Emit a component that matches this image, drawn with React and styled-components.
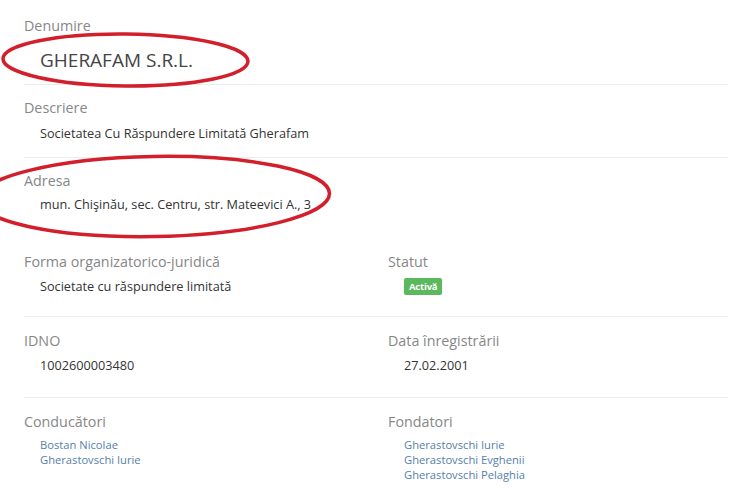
import React from "react";
import styled, { createGlobalStyle } from "styled-components";

const Global = createGlobalStyle`
  html, body { margin: 0; padding: 0; background: #fff; }
  body { font-family: "Open Sans", "Noto Sans", sans-serif; -webkit-font-smoothing: antialiased; }
`;

const Page = styled.div`
  position: relative;
  width: 740px;
  height: 488px;
  overflow: hidden;
  background: #fff;
`;

const Content = styled.div`
  padding: 16px 12px 0 24px;
`;

const Section = styled.div`
  padding: ${(p) => p.$pad || "13px 0 16px"};
  border-bottom: ${(p) => (p.$noBorder ? "none" : "1px solid #ececec")};
`;

const Row = styled.div`
  display: grid;
  grid-template-columns: 364px 1fr;
  padding: ${(p) => p.$pad || "14px 0 24px"};
  border-bottom: ${(p) => (p.$noBorder ? "none" : "1px solid #ececec")};
`;

const Label = styled.div`
  font-size: 14.3px;
  line-height: 20px;
  color: #878787;
`;

const Title = styled.div`
  margin-top: 11px;
  padding-left: 16px;
  font-size: 19px;
  line-height: 26px;
  color: #444;
`;

const Value = styled.div`
  margin-top: ${(p) => p.$mt || "6px"};
  padding-left: 16px;
  font-size: 12.7px;
  line-height: 16px;
  color: #333;
`;

const LinkList = styled.div`
  margin-top: 5px;
  padding-left: 16px;
  display: flex;
  flex-direction: column;
`;

const Link = styled.a`
  font-size: 11.2px;
  line-height: 15px;
  color: #5580aa;
  text-decoration: none;
`;

const BadgeWrap = styled.div`
  display: flex;
  margin-top: 6px;
  padding-left: 16px;
`;

const Badge = styled.span`
  display: block;
  background: #5cb85c;
  color: #fff;
  font-size: 9.5px;
  font-weight: 700;
  line-height: 17px;
  padding: 0 5px;
  border-radius: 2px;
  letter-spacing: -0.2px;
`;

const Overlay = styled.svg`
  position: absolute;
  left: 0;
  top: 0;
  pointer-events: none;
`;

export default function App() {
  return (
    <Page>
      <Global />
      <Content>
        <Section $pad="0 0 11px">
          <Label>Denumire</Label>
          <Title>GHERAFAM S.R.L.</Title>
        </Section>
        <Section>
          <Label>Descriere</Label>
          <Value $mt="7px">Societatea Cu Răspundere Limitată Gherafam</Value>
        </Section>
        <Section $noBorder $pad="13px 0 40px">
          <Label>Adresa</Label>
          <Value $mt="5px">mun. Chişinău, sec. Centru, str. Mateevici A., 3</Value>
        </Section>
        <Row $pad="0 0 21px">
          <div>
            <Label>Forma organizatorico-juridică</Label>
            <Value $mt="6px">Societate cu răspundere limitată</Value>
          </div>
          <div>
            <Label>Statut</Label>
            <BadgeWrap>
              <Badge>Activă</Badge>
            </BadgeWrap>
          </div>
        </Row>
        <Row>
          <div>
            <Label>IDNO</Label>
            <Value>1002600003480</Value>
          </div>
          <div>
            <Label>Data înregistrării</Label>
            <Value>27.02.2001</Value>
          </div>
        </Row>
        <Row $noBorder>
          <div>
            <Label>Conducători</Label>
            <LinkList>
              <Link href="#">Bostan Nicolae</Link>
              <Link href="#">Gherastovschi Iurie</Link>
            </LinkList>
          </div>
          <div>
            <Label>Fondatori</Label>
            <LinkList>
              <Link href="#">Gherastovschi Iurie</Link>
              <Link href="#">Gherastovschi Evghenii</Link>
              <Link href="#">Gherastovschi Pelaghia</Link>
            </LinkList>
          </div>
        </Row>
      </Content>
      <Overlay width="740" height="488" viewBox="0 0 740 488">
        <ellipse cx="125.5" cy="60" rx="122.5" ry="26" fill="none" stroke="#d21f2b" strokeWidth="3.5" transform="rotate(0.6 125 60)" />
        <ellipse cx="154" cy="196.5" rx="175.5" ry="40" fill="none" stroke="#d21f2b" strokeWidth="3.5" transform="rotate(-1 154 196)" />
      </Overlay>
    </Page>
  );
}
